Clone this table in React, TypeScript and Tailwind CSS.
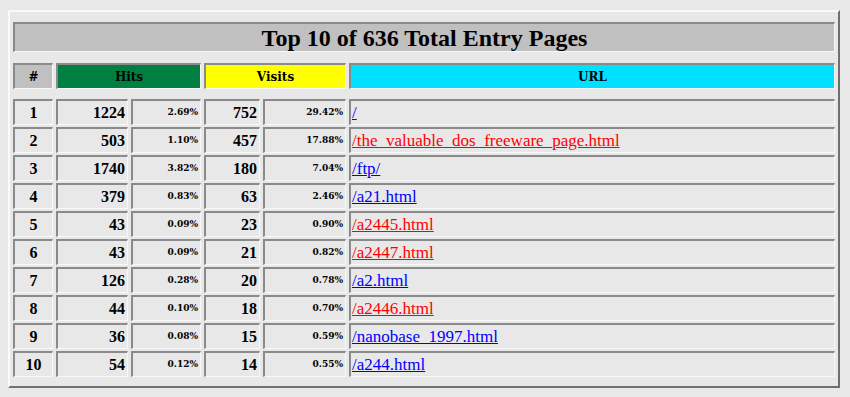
import React from 'react';

type Row = { n: number; hits: number; hitsPct: string; visits: number; visitsPct: string; url: string; red?: boolean };

const rows: Row[] = [
  { n: 1, hits: 1224, hitsPct: '2.69%', visits: 752, visitsPct: '29.42%', url: '/' },
  { n: 2, hits: 503, hitsPct: '1.10%', visits: 457, visitsPct: '17.88%', url: '/the_valuable_dos_freeware_page.html', red: true },
  { n: 3, hits: 1740, hitsPct: '3.82%', visits: 180, visitsPct: '7.04%', url: '/ftp/' },
  { n: 4, hits: 379, hitsPct: '0.83%', visits: 63, visitsPct: '2.46%', url: '/a21.html' },
  { n: 5, hits: 43, hitsPct: '0.09%', visits: 23, visitsPct: '0.90%', url: '/a2445.html', red: true },
  { n: 6, hits: 43, hitsPct: '0.09%', visits: 21, visitsPct: '0.82%', url: '/a2447.html', red: true },
  { n: 7, hits: 126, hitsPct: '0.28%', visits: 20, visitsPct: '0.78%', url: '/a2.html' },
  { n: 8, hits: 44, hitsPct: '0.10%', visits: 18, visitsPct: '0.70%', url: '/a2446.html', red: true },
  { n: 9, hits: 36, hitsPct: '0.08%', visits: 15, visitsPct: '0.59%', url: '/nanobase_1997.html' },
  { n: 10, hits: 54, hitsPct: '0.12%', visits: 14, visitsPct: '0.55%', url: '/a244.html' },
];

// inset cell border like an old html table
const cell = 'border-t-2 border-l-2 border-b border-r border-t-[#8a8a8a] border-l-[#8a8a8a] border-b-[#f8f8f8] border-r-[#f8f8f8]';
const cols = 'grid grid-cols-[40px_72px_70px_56px_83px_1fr] gap-x-[3px]';

export default function App() {
  return (
    <div className="w-[850px] h-[397px] bg-[#e8e8e8] pt-[10px] pl-[8px] font-['Liberation_Serif',serif] text-black">
      <div className="w-[832px] border-2 border-t-[#fafafa] border-l-[#fafafa] border-r-[#6f6f6f] border-b-[#6f6f6f] bg-[#e8e8e8] pt-[10px] pb-[9px] px-[3px]">
        <div className={`${cell} h-[30px] bg-[#c0c0c0] flex items-center justify-center text-[24px] font-bold`}>
          Top 10 of 636 Total Entry Pages
        </div>

        <div className={`${cols} mt-[11px] h-[26px] font-['DejaVu_Serif',serif] text-[12px] font-bold`}>
          <div className={`${cell} bg-[#c0c0c0] flex items-center justify-center`}>#</div>
          <div className={`${cell} col-span-2 bg-[#008040] flex items-center justify-center`}>Hits</div>
          <div className={`${cell} col-span-2 bg-[#ffff00] flex items-center justify-center`}>Visits</div>
          <div className={`${cell} bg-[#00e0ff] flex items-center justify-center`}>URL</div>
        </div>

        <div className={`${cols} mt-[10px] gap-y-[2px] auto-rows-[26px]`}>
          {rows.map((r) => (
            <React.Fragment key={r.n}>
              <div className={`${cell} flex items-center justify-center text-[16px] font-bold`}>{r.n}</div>
              <div className={`${cell} flex items-center justify-end pr-[2px] text-[16px] font-bold`}>{r.hits}</div>
              <div className={`${cell} flex items-center justify-end pr-[2px] font-['DejaVu_Serif',serif] text-[9px] font-bold`}>{r.hitsPct}</div>
              <div className={`${cell} flex items-center justify-end pr-[2px] text-[16px] font-bold`}>{r.visits}</div>
              <div className={`${cell} flex items-center justify-end pr-[2px] font-['DejaVu_Serif',serif] text-[9px] font-bold`}>{r.visitsPct}</div>
              <div className={`${cell} flex items-center pl-[1px] text-[17px]`}>
                <a href="#" className={`underline ${r.red ? 'text-[#ff0000]' : 'text-[#0000ff]'}`}>{r.url}</a>
              </div>
            </React.Fragment>
          ))}
        </div>
      </div>
    </div>
  );
}
